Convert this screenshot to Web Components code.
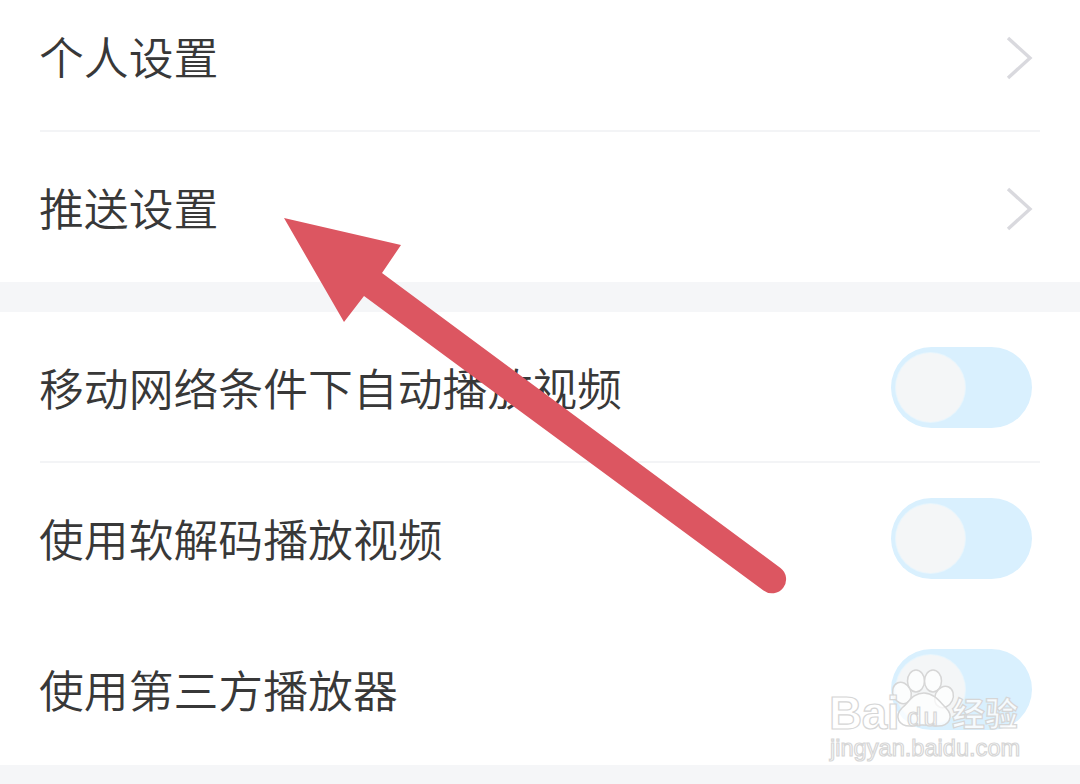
<!DOCTYPE html>
<html lang="zh-CN">
<head>
<meta charset="utf-8">
<title>设置</title>
<style>
  html, body { margin: 0; height: 100%; background: #f5f6f8; overflow: hidden; }
  body { font-family: "Noto Sans CJK SC", "Liberation Sans", sans-serif; }
</style>
</head>
<body>
<settings-page>
  <settings-group style="margin-top:-19px">
    <setting-row label="个人设置" kind="link" divider></setting-row>
    <setting-row label="推送设置" kind="link"></setting-row>
  </settings-group>
  <settings-group>
    <setting-row label="移动网络条件下自动播放视频" kind="toggle" divider></setting-row>
    <setting-row label="使用软解码播放视频" kind="toggle"></setting-row>
    <setting-row label="使用第三方播放器" kind="toggle" last></setting-row>
  </settings-group>
  <arrow-mark></arrow-mark>
  <baidu-mark></baidu-mark>
</settings-page>

<script>
/* page shell: holds the groups, arrow and watermark lie on top */
class SettingsPage extends HTMLElement {
  connectedCallback() {
    const shadow = this.attachShadow({ mode: 'open' });
    shadow.innerHTML = `
      <style>
        :host {
          display: flex; flex-direction: column; gap: 30px;
          position: relative; width: 1080px; height: 784px; overflow: hidden;
          background: #f5f6f8;
        }
      </style>
      <slot></slot>
    `;
  }
}

class SettingsGroup extends HTMLElement {
  connectedCallback() {
    const shadow = this.attachShadow({ mode: 'open' });
    shadow.innerHTML = `
      <style>
        :host { display: block; background: #fff; }
      </style>
      <slot></slot>
    `;
  }
}

class SettingRow extends HTMLElement {
  connectedCallback() {
    const shadow = this.attachShadow({ mode: 'open' });
    const tail = this.getAttribute('kind') === 'toggle'
      ? '<toggle-switch></toggle-switch>'
      : '<row-chevron></row-chevron>';
    shadow.innerHTML = `
      <style>
        :host { display: block; padding: 0 40px; }
        .row {
          display: flex; align-items: center; justify-content: space-between;
          height: 150px; box-sizing: border-box;
        }
        :host([divider]) .row { height: 151px; box-shadow: inset 0 -2px 0 #f3f4f6; }
        :host([last]) .row { height: 152px; }
        .label {
          font: 350 44.85px/1 "Noto Sans CJK SC", "Liberation Sans", sans-serif;
          color: #383838; margin-left: -1px;
        }
      </style>
      <div class="row">
        <span class="label">${this.getAttribute('label')}</span>
        ${tail}
      </div>
    `;
  }
}

class RowChevron extends HTMLElement {
  connectedCallback() {
    const shadow = this.attachShadow({ mode: 'open' });
    shadow.innerHTML = `
      <style>
        :host { display: block; width: 30px; height: 44px; margin: 3px 5px 0 0; }
        svg { display: block; }
      </style>
      <svg width="30" height="44" viewBox="0 0 30 44" fill="none">
        <path d="M3 2 L25 22 L3 42" stroke="#d9d9de" stroke-width="3.4" stroke-linejoin="miter"/>
      </svg>
    `;
  }
}

class ToggleSwitch extends HTMLElement {
  connectedCallback() {
    const shadow = this.attachShadow({ mode: 'open' });
    shadow.innerHTML = `
      <style>
        :host {
          display: flex; align-items: center; box-sizing: border-box;
          width: 141px; height: 81px; padding: 0 5px; margin-right: 8px;
          border-radius: 41px; background: #d9f0fe;
        }
        .knob {
          width: 69px; height: 69px; border-radius: 50%;
          background: #f4f6f7; box-shadow: 0 0 0 1px #e8f5fc;
        }
      </style>
      <div class="knob"></div>
    `;
  }
}

/* red annotation arrow drawn over the list */
class ArrowMark extends HTMLElement {
  connectedCallback() {
    const shadow = this.attachShadow({ mode: 'open' });
    shadow.innerHTML = `
      <style>
        :host { position: absolute; left: 0; top: 0; pointer-events: none; }
        svg { display: block; }
      </style>
      <svg width="1080" height="784" viewBox="0 0 1080 784">
        <path fill="#dc5661" d="M284 218 L401 245 L382 273 L780.5 568 A14 14 0 0 1 763.5 590.5 L364 296 L344 322 Z"/>
      </svg>
    `;
  }
}

/* jingyan watermark, bottom right */
class BaiduMark extends HTMLElement {
  connectedCallback() {
    const shadow = this.attachShadow({ mode: 'open' });
    shadow.innerHTML = `
      <style>
        :host {
          position: absolute; left: 828px; top: 666px; width: 200px; height: 100px;
          font-family: "Liberation Sans", "Noto Sans CJK SC", sans-serif;
          pointer-events: none;
        }
        .t {
          position: absolute; white-space: nowrap; line-height: 1;
          color: rgba(255,255,255,.8);
          -webkit-text-stroke: 1.2px #d6d6d6;
        }
        .bai { left: 1px; top: 28px; font-size: 46px; line-height: 38px; font-weight: 700; letter-spacing: -.5px; }
        .du { left: 79px; top: 38px; font-size: 26px; letter-spacing: 2px; color: rgba(255,255,255,.4); }
        .jy { left: 124px; top: 30px; font-size: 33px; font-weight: 700;
              font-family: "Noto Sans CJK SC", sans-serif; }
        .url { left: 2px; top: 70px; font-size: 23.6px; line-height: 24px; }
        svg { position: absolute; left: 0; top: 0; }
      </style>
      <svg width="200" height="100" viewBox="0 0 200 100" fill="rgba(255,255,255,.72)" stroke="#d6d6d6" stroke-width="1.5">
        <ellipse cx="74" cy="27" rx="9" ry="11" transform="rotate(-25 74 27)"/>
        <ellipse cx="88" cy="15" rx="8.5" ry="11"/>
        <ellipse cx="105" cy="15" rx="8.5" ry="11"/>
        <ellipse cx="116" cy="31" rx="9" ry="11" transform="rotate(25 116 31)"/>
        <path d="M96 27 C106 27 112 36 118 42 C126 50 122 61 108 60 C100 59 92 58 84 60 C70 61 66 50 74 42 C81 36 85 27 96 27 Z"/>
      </svg>
      <span class="t bai">Bai</span>
      <span class="t du">du</span>
      <span class="t jy">经验</span>
      <span class="t url">jingyan.baidu.com</span>
    `;
  }
}

customElements.define('settings-page', SettingsPage);
customElements.define('settings-group', SettingsGroup);
customElements.define('setting-row', SettingRow);
customElements.define('row-chevron', RowChevron);
customElements.define('toggle-switch', ToggleSwitch);
customElements.define('arrow-mark', ArrowMark);
customElements.define('baidu-mark', BaiduMark);
</script>
</body>
</html>
